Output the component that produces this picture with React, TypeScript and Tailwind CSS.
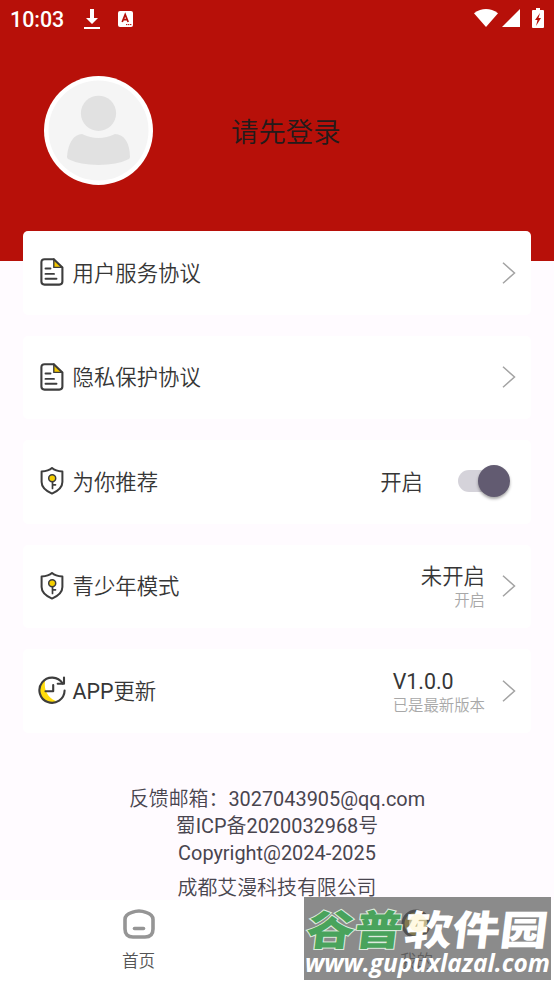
import type { ReactNode } from "react";

function DocIcon() {
  return (
    <svg viewBox="0 0 24 28" className="h-7 w-6" fill="none" stroke="#3d3d3d" strokeWidth="2.1" strokeLinejoin="round" strokeLinecap="round">
      <path d="M13.8 1v8.6H23z" fill="#f5c800" stroke="none" />
      <path d="M13.8 1.2H4.5Q1.4 1.2 1.4 4.3v19.3q0 3 3.1 3h14.8q3.1 0 3.1-3V9.4z" />
      <path d="M13.8 1v8.4h8.6" strokeWidth="1.4" />
      <path d="M5.5 10.5h5M5.5 15.9h8.5M5.5 20.8h11" strokeWidth="1.9" />
    </svg>
  );
}

function ShieldIcon() {
  return (
    <svg viewBox="0 0 24 28" className="h-7 w-6" fill="none" stroke="#3d3d3d" strokeWidth="2" strokeLinejoin="round" strokeLinecap="round">
      <path d="M12 1C9.5 3.2 6 4.2 1.6 4.6V15c0 6 4.5 9 10.4 11.6C18 24 22.4 21 22.4 15V4.6C18 4.2 14.5 3.2 12 1z" />
      <circle cx="12.2" cy="11.3" r="3.5" fill="#f5cf00" strokeWidth="1.5" />
      <path d="M12.5 15v6.5M12.5 17.8h3" strokeWidth="1.7" />
    </svg>
  );
}

function UpdateIcon() {
  return (
    <svg viewBox="0 0 28 28" className="h-7 w-7" fill="none" stroke="#3d3d3d" strokeWidth="2.1" strokeLinecap="round" strokeLinejoin="round">
      <path d="M7.5 3.5A12.6 12.6 0 0 0 20 25.6C11 23.5 4.5 14 7.5 3.5z" fill="#ffdc0a" stroke="none" />
      <path d="M24.6 7.4A12.6 12.6 0 1 0 26.6 14.5" />
      <path d="M26 1.5v6.3h-6.3" />
      <path d="M15.2 9v6.2H7.5" />
    </svg>
  );
}

function Arrow() {
  return (
    <svg viewBox="0 0 14 22" className="h-[22px] w-[14px]" fill="none" stroke="#a3a3a3" strokeWidth="1.5">
      <path d="M1 .8 12.5 11 1 21.2" />
    </svg>
  );
}

// Roboto has no 350 weight, so latin runs are set back to regular
function Latin({ children }: { children: ReactNode }) {
  return <span className="font-normal">{children}</span>;
}

function Row({ icon, label, children }: { icon: ReactNode; label: ReactNode; children: ReactNode }) {
  return (
    <div className="flex h-[83.5px] items-center rounded-[5px] bg-white px-[15px]">
      <div className="mb-px flex w-7 justify-center">{icon}</div>
      <span className="mt-0.5 ml-[6.5px] flex-1">{label}</span>
      {children}
    </div>
  );
}

function Value({ main, sub, align }: { main: ReactNode; sub: string; align: string }) {
  return (
    <div className={`mt-[3px] mr-[17px] ${align}`}>
      <p className="leading-[27px]">{main}</p>
      <p className="text-[15.4px] leading-[22px] text-[#a8a8a8]">{sub}</p>
    </div>
  );
}

function StatusBar() {
  return (
    <div className="flex h-9 items-center pr-2.5 pl-[10px] text-white">
      <span className="mt-1 text-[21.4px] font-medium">10:03</span>
      <svg viewBox="0 0 16 22" className="mt-0.5 ml-5 h-[22px] w-4" fill="currentColor">
        <path d="M6 1h4v9h4l-6 6-6-6h4zM0 19h16v2H0z" />
      </svg>
      <svg viewBox="0 0 15 16" className="mt-px ml-[18px] h-4 w-[15px]">
        <rect width="15" height="16" rx="2" fill="#fff" />
        <path d="m4.2 11 3-7.4 3 7.4M5.2 8.7h4" fill="none" stroke="#b71009" strokeWidth="1.7" />
        <path d="M8 13.6h6" stroke="#b71009" strokeDasharray="1.4 .6" />
      </svg>
      <div className="ml-auto flex items-center">
        <svg viewBox="0 0 24 18" className="h-[18px] w-6" fill="currentColor">
          <path d="M0 4.2Q12-4 24 4.2L12 18z" />
        </svg>
        <svg viewBox="0 0 18 18" className="ml-1 h-[18px] w-[18px]" fill="currentColor">
          <path d="M18 0v18H0z" />
        </svg>
        <svg viewBox="0 0 12 20" className="ml-3 h-5 w-3">
          <path d="M4 0h4v2h3q1 0 1 1v16q0 1-1 1H1q-1 0-1-1V3q0-1 1-1h3z" fill="#fff" />
          <path d="M8 5 3 12h2.5L4 18l5-8H6.5z" fill="#b71009" />
        </svg>
      </div>
    </div>
  );
}

function Avatar() {
  return (
    <svg viewBox="0 0 109 109" className="h-[109px] w-[109px]">
      <circle cx="54.5" cy="54.5" r="54.5" fill="#fff" />
      <circle cx="54.5" cy="54.5" r="50" fill="#f5f5f5" />
      <g fill="#e1e1e1">
        <circle cx="54.5" cy="37.3" r="17.6" />
        <path d="M38 58Q54.5 66 71 58C80 58 86 67 86 81Q86 82.5 84.5 83.3Q73 89 54.5 89Q36 89 24.5 83.3Q23 82.5 23 81C24 67 30 58 38 58z" />
      </g>
    </svg>
  );
}

function Watermark() {
  return (
    <div className="absolute top-[897px] left-[304px] h-[83px] w-[247px] bg-[#858585]/95">
      <svg viewBox="0 0 247 83" className="h-full w-full">
        <circle cx="112" cy="27" r="13" fill="#817850" stroke="#505050" strokeWidth="3" />
        <text x="96" y="70" fontSize="16.6" fill="#5e5e5e">我的</text>
        <g fontWeight="900" fontSize="41" transform="skewX(-7)">
          <text x="7" y="48" textLength="96" lengthAdjust="spacingAndGlyphs" fill="#49a35c" stroke="#dcebdd" strokeWidth="2" paintOrder="stroke">谷普</text>
          <text x="105" y="48" textLength="143" lengthAdjust="spacingAndGlyphs" fill="#fff">软件园</text>
        </g>
        <circle cx="114" cy="26" r="9" fill="#fff4c5" opacity=".5" />
        <text x="1" y="75" textLength="245" lengthAdjust="spacingAndGlyphs" fill="#fff" fontSize="25" fontWeight="700" fontStyle="italic" className="font-['Open_Sans',sans-serif]">
          www.gupuxlazal.com
        </text>
      </svg>
    </div>
  );
}

export default function App() {
  return (
    <div className="relative flex h-[984px] w-[554px] flex-col overflow-hidden bg-[#fffbff] font-[Roboto,'Noto_Sans_CJK_SC',sans-serif] text-[21.4px] font-[350] text-[#363636]">
      <header className="h-[261px] shrink-0 bg-[#b71009]">
        <StatusBar />
        <div className="flex items-center pt-10 pl-11">
          <Avatar />
          <span className="mt-1.5 ml-[78px] text-[27.4px] text-[#231b1b]">请先登录</span>
        </div>
      </header>

      <main className="relative -mt-[30px] flex flex-col gap-[21px] px-[23px]">
        <Row icon={<DocIcon />} label="用户服务协议">
          <Arrow />
        </Row>
        <Row icon={<DocIcon />} label="隐私保护协议">
          <Arrow />
        </Row>
        <Row icon={<ShieldIcon />} label="为你推荐">
          <span className="mt-0.5">开启</span>
          <div className="mr-1.5 mb-px ml-[35px] flex h-[22px] w-[52px] items-center justify-end rounded-full bg-linear-to-r from-[#d5d3da] from-80% to-white to-80%">
            <div className="h-8 w-8 shrink-0 rounded-full bg-[#625b71] shadow-[0_2px_3px_rgba(0,0,0,0.35)]" />
          </div>
        </Row>
        <Row icon={<ShieldIcon />} label="青少年模式">
          <Value main="未开启" sub="开启" align="text-right" />
          <Arrow />
        </Row>
        <Row icon={<UpdateIcon />} label={<><Latin>APP</Latin>更新</>}>
          <Value main={<Latin>V1.0.0</Latin>} sub="已是最新版本" align="text-left" />
          <Arrow />
        </Row>
      </main>

      <footer className="mt-[53px] text-center text-[19.9px] leading-[27px] text-[#49454f]">
        <p>
          反馈邮箱：<Latin>3027043905@qq.com</Latin>
        </p>
        <p>
          蜀<Latin>ICP</Latin>备<Latin>2020032968</Latin>号
        </p>
        <p>
          <Latin>Copyright@2024-2025</Latin>
        </p>
        <p className="mt-[8px]">成都艾漫科技有限公司</p>
      </footer>

      <nav className="absolute inset-x-0 bottom-0 flex h-[84px] bg-white">
        <div className="flex w-1/2 flex-col items-center pt-[9px] text-[16.6px] leading-6 text-[#555555]">
          <svg viewBox="0 0 32 30" className="h-[30px] w-8" fill="none" stroke="#959595" strokeWidth="3.6" strokeLinecap="round">
            <path d="M9 3.4Q16 .6 23 3.4Q30 5.5 30 10.500v9.500q0 8-8 8H10q-8 0-8-8v-9.500Q2 5.500 9 3.400z" />
            <path d="M11.5 19.5h9" />
          </svg>
          <span className="mt-[11px]">首页</span>
        </div>
      </nav>
      <Watermark />
    </div>
  );
}
